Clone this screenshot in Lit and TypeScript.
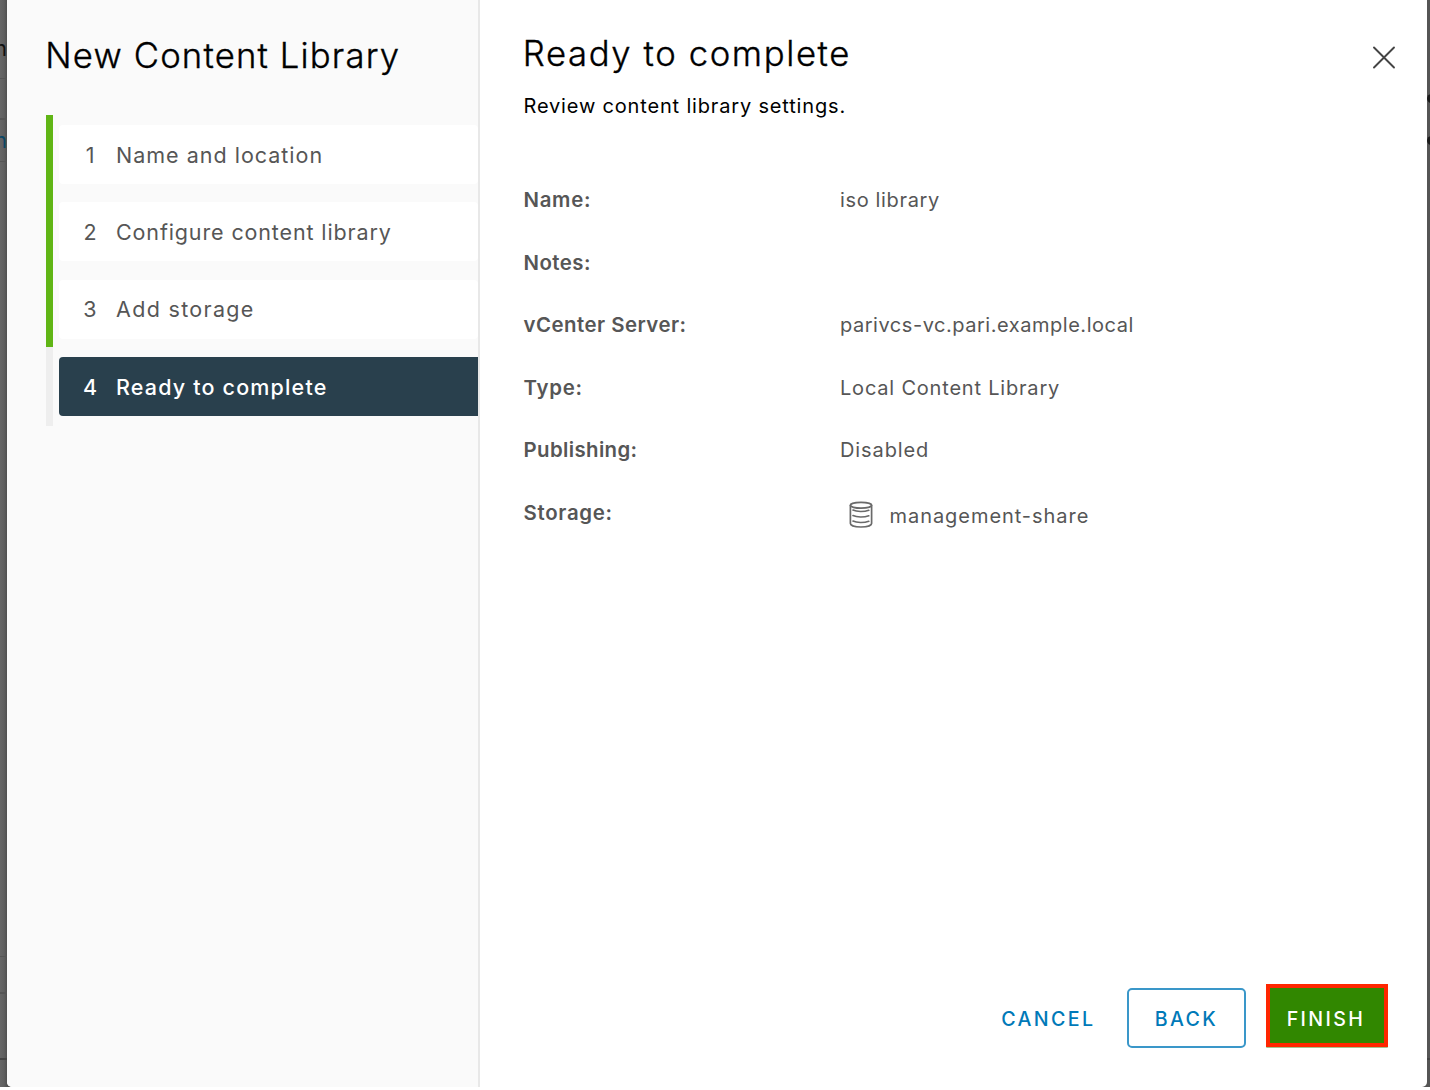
import { LitElement, html, css, svg, nothing } from "lit";
import { customElement, property } from "lit/decorators.js";
import { classMap } from "lit/directives/class-map.js";

interface Step {
  label: string;
  state: "done" | "current";
  fit: string;
}

interface Setting {
  label: string;
  value: string;
  fit: string;
  icon?: boolean;
}

const STEPS: Step[] = [
  { label: "Name and location", state: "done", fit: "s1" },
  { label: "Configure content library", state: "done", fit: "s2" },
  { label: "Add storage", state: "done", fit: "s3" },
  { label: "Ready to complete", state: "current", fit: "s4" },
];

const SETTINGS: Setting[] = [
  { label: "Name:", value: "iso library", fit: "r1" },
  { label: "Notes:", value: "", fit: "r2" },
  { label: "vCenter Server:", value: "parivcs-vc.pari.example.local", fit: "r3" },
  { label: "Type:", value: "Local Content Library", fit: "r4" },
  { label: "Publishing:", value: "Disabled", fit: "r5" },
  { label: "Storage:", value: "management-share", fit: "r6", icon: true },
];

@customElement("page-backdrop")
export class PageBackdrop extends LitElement {
  static styles = css`
    :host {
      display: flex;
      flex-direction: column;
      background: #636363;
      overflow: hidden;
      font-family: Inter, "Liberation Sans", sans-serif;
      font-size: 21px;
    }
    .band {
      display: flex;
      flex: none;
      box-sizing: border-box;
      align-items: center;
      justify-content: space-between;
      border-bottom: 1px solid #555;
      background: linear-gradient(to right, #666 0, #5f5f5f 4px, #505050 7px, #555 50%);
    }
    .top { height: 79px; padding-top: 18px; color: #111; }
    .head { height: 41px; border-bottom-width: 2px; }
    .item { height: 42px; color: #0b4766; }
    .body { height: 795px; }
    .foot1 { height: 37px; border-bottom-width: 2px; }
    .foot2 { height: 66px; border-bottom: 2px solid #444; }
    .rest { height: 27px; border: 0; }
    .letter { width: 7px; overflow: hidden; display: flex; justify-content: flex-end; }
    .dot { width: 9px; height: 9px; margin-right: -6px; border-radius: 50%; background: #1b1b1b; }
  `;

  render() {
    return html`
      <div class="band top"><span class="letter">n</span></div>
      <div class="band head"><span></span><span class="dot"></span></div>
      <div class="band item"><span class="letter">n</span><span class="dot"></span></div>
      <div class="band body"></div>
      <div class="band foot1"></div>
      <div class="band foot2"></div>
      <div class="band rest"></div>
    `;
  }
}

@customElement("wizard-steps")
export class WizardSteps extends LitElement {
  @property({ attribute: false }) steps: Step[] = [];

  static styles = css`
    :host { display: block; }
    .list { margin: 0; padding: 0; list-style: none; }
    .step {
      display: flex;
      box-sizing: border-box;
      height: 77.3px;
      padding: 10px 0 8.3px 6px;
      border-left: 7px solid #eee;
    }
    .done { border-left-color: #60b515; }
    .current { height: 79px; padding-bottom: 10px; }
    .pill {
      display: flex;
      flex: 1;
      align-items: center;
      padding: 0 0 0 19px;
      border-radius: 4px;
      background: #fff;
      color: #565656;
      font-size: 21.5px;
      line-height: 26px;
      white-space: nowrap;
    }
    .current .pill {
      padding-top: 2px;
      border-radius: 4px 0 0 4px;
      background: #29404d;
      color: #fff;
      font-weight: 500;
    }
    .num { width: 24px; margin-right: 14px; text-align: center; }
    .s1 { letter-spacing: 1px; }
    .s2 { letter-spacing: 0.87px; }
    .s3 { letter-spacing: 1.32px; }
    .s4 { letter-spacing: 1.17px; }
  `;

  render() {
    return html`<ol class="list">
      ${this.steps.map(
        (s, i) => html`<li class=${classMap({ step: true, [s.state]: true })}>
          <div class="pill"><span class="num">${i + 1}</span><span class=${s.fit}>${s.label}</span></div>
        </li>`
      )}
    </ol>`;
  }
}

@customElement("settings-list")
export class SettingsList extends LitElement {
  @property({ attribute: false }) settings: Setting[] = [];

  static styles = css`
    :host { display: block; }
    .list {
      display: grid;
      grid-template-columns: 316.5px 1fr;
      grid-auto-rows: 62.5px;
      align-items: center;
      margin: 0;
      color: #565656;
      font-size: 20px;
      line-height: 26px;
      white-space: nowrap;
    }
    .term { font-size: 20.4px; font-weight: 600; letter-spacing: 0.48px; }
    .term.r1 { letter-spacing: 0.7px; }
    .term.r4 { letter-spacing: 0.75px; }
    .term.r5 { letter-spacing: 0.38px; }
    .term.r6 { letter-spacing: 0.7px; }
    .value { display: flex; align-items: center; margin: 0; letter-spacing: 0.53px; }
    .v-r1 { letter-spacing: 0.65px; }
    .v-r4 { letter-spacing: 0.8px; }
    .v-r5 { letter-spacing: 0.9px; }
    .v-r6 { letter-spacing: 0.95px; }
    .with-icon { padding: 6px 0 0 8px; }
    .disk { width: 26px; height: 28px; margin: 0 15.5px 2px 0; }
  `;

  private disk() {
    return html`<svg class="disk" viewBox="0 0 26 28" fill="none" stroke="#6a6a6a" stroke-width="1.7" stroke-linecap="round">
      ${svg`<ellipse cx="13" cy="4.3" rx="10.6" ry="2.9"/>
      <path d="M2.4 4.3V22.6C2.4 24.6 7 26 13 26S23.6 24.6 23.6 22.6V4.3"/>
      <path d="M5 9.1C8.8 10.9 16 11 20.8 9.3M5 14.6C8.8 16.4 16 16.5 20.8 14.8M5 20.1C8.8 21.9 16 22 20.8 20.3"/>`}
    </svg>`;
  }

  render() {
    return html`<dl class="list">
      ${this.settings.map(
        (r) => html`<dt class="term ${r.fit}">${r.label}</dt>
          <dd class=${classMap({ value: true, "with-icon": !!r.icon })}>
            ${r.icon ? this.disk() : nothing}<span class="v-${r.fit}">${r.value}</span>
          </dd>`
      )}
    </dl>`;
  }
}

@customElement("app-root")
export class AppRoot extends LitElement {
  static styles = css`
    :host {
      display: block;
      position: relative;
      width: 1430px;
      height: 1090px;
      overflow: hidden;
      background: #fff;
      font-family: Inter, "Liberation Sans", sans-serif;
    }
    .backdrop { position: absolute; inset: 0 0 3px 0; }
    .modal {
      position: relative;
      display: grid;
      grid-template-columns: 473px 1fr;
      box-sizing: border-box;
      width: 1420px;
      height: 1087px;
      margin-left: 7px;
      overflow: hidden;
      border-radius: 0 0 5px 5px;
      background: #fff;
      color: #000;
    }
    .side {
      box-sizing: border-box;
      padding: 33px 0 0 39px;
      border-right: 2px solid #e8e8e8;
      background: #fafafa;
    }
    .title {
      margin: 0 0 0 -0.7px;
      font-size: 34.7px;
      font-weight: 300;
      line-height: 44px;
      white-space: nowrap;
      -webkit-text-stroke: 0.35px #000;
    }
    .t1 { letter-spacing: 1.15px; }
    .t2 { letter-spacing: 1.6px; }
    .steps { margin-top: 38px; }
    .main {
      display: flex;
      flex-direction: column;
      box-sizing: border-box;
      padding: 31px 39px 36px 43.5px;
    }
    .head { display: flex; justify-content: space-between; }
    .close { width: 24px; height: 24px; margin: 14.5px -8px 0 0; }
    .intro {
      margin: 18px 0 0;
      font-size: 20px;
      line-height: 26px;
      letter-spacing: 0.83px;
      white-space: nowrap;
    }
    .settings { margin-top: 50px; }
    .actions {
      display: flex;
      align-items: center;
      justify-content: flex-end;
      margin-top: auto;
      font-size: 19.6px;
      line-height: 24px;
    }
    .btn {
      display: flex;
      box-sizing: border-box;
      align-items: center;
      justify-content: center;
      height: 60px;
      padding: 2px 0 0;
      border: 0;
      background: none;
      color: #0079b8;
      font: inherit;
      font-weight: 500;
      letter-spacing: 2.4px;
    }
    .cancel { margin-right: 31.5px; }
    .back { width: 119px; margin-right: 20px; border: 2px solid #3a97c9; border-radius: 5px; }
    .finish {
      width: 122px;
      height: 63px;
      margin-bottom: 4px;
      padding: 6px 2px 0 0;
      border: 4px solid #ff2600;
      background: #318700;
      box-shadow: 0 1px 0 -0.3px #7da95e;
      color: #fff;
    }
  `;

  render() {
    return html`
      <page-backdrop class="backdrop"></page-backdrop>
      <div class="modal">
        <div class="side">
          <h1 class="title t1">New Content Library</h1>
          <wizard-steps class="steps" .steps=${STEPS}></wizard-steps>
        </div>
        <div class="main">
          <div class="head">
            <h2 class="title t2">Ready to complete</h2>
            <svg class="close" viewBox="0 0 24 24" fill="none" stroke="#444" stroke-width="1.9" stroke-linecap="round">
              <path d="M2 1.5L22 21.5M22 1.5L2 21.5" />
            </svg>
          </div>
          <p class="intro">Review content library settings.</p>
          <settings-list class="settings" .settings=${SETTINGS}></settings-list>
          <div class="actions">
            <button class="btn cancel">CANCEL</button>
            <button class="btn back">BACK</button>
            <button class="btn finish">FINISH</button>
          </div>
        </div>
      </div>
    `;
  }
}
